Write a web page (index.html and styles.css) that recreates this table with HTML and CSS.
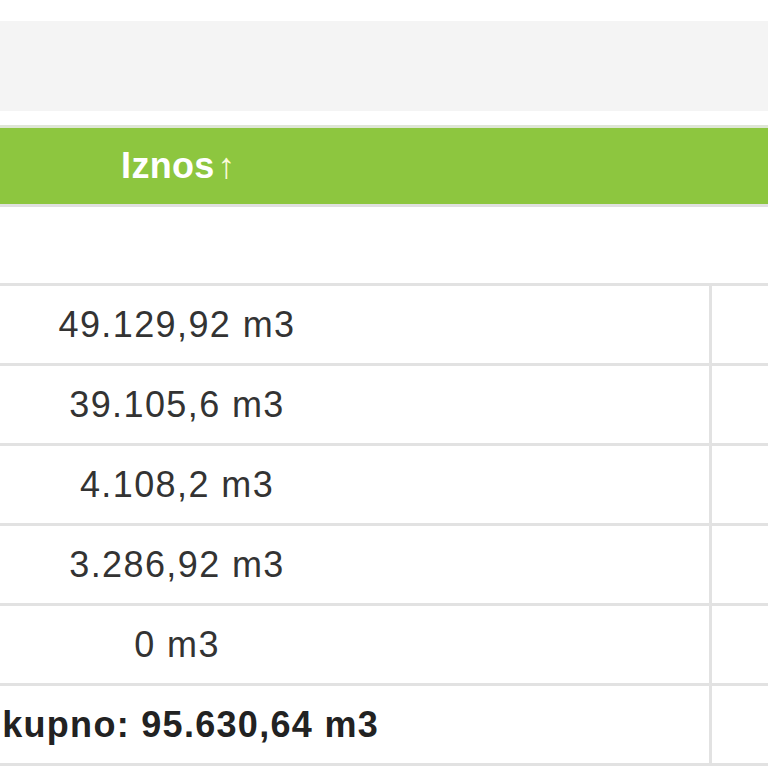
FILE: index.html
```html
<!DOCTYPE html>
<html lang="hr">
<head>
<meta charset="utf-8">
<title>Iznos</title>
<link rel="stylesheet" href="styles.css">
</head>
<body>
<div class="toolbar"></div>
<table class="grid">
  <thead>
    <tr><th class="head">Iznos<span class="arrow">↑</span></th><th class="head"></th></tr>
  </thead>
  <tbody>
    <tr class="blank"><td></td><td></td></tr>
    <tr><td class="val">49.129,92 m3</td><td></td></tr>
    <tr><td class="val">39.105,6 m3</td><td></td></tr>
    <tr><td class="val">4.108,2 m3</td><td></td></tr>
    <tr><td class="val">3.286,92 m3</td><td></td></tr>
    <tr><td class="val">0 m3</td><td></td></tr>
    <tr class="total"><td class="val">Ukupno: 95.630,64 m3</td><td></td></tr>
  </tbody>
</table>
</body>
</html>
```

FILE: styles.css
```css
html, body {
  margin: 0;
  padding: 0;
  overflow: hidden;
  background: #ffffff;
}
body {
  font-family: "Liberation Sans", Arial, sans-serif;
  color: #333333;
}
.toolbar {
  margin-top: 21px;
  height: 90px;
  background: #f4f4f4;
}
.grid {
  margin-top: 14px;
  margin-left: -355px;
  border-collapse: separate;
  border-spacing: 0;
  width: 1600px;
  table-layout: fixed;
}
.grid th, .grid td {
  padding: 0;
  box-sizing: content-box;
  font-size: 36px;
  text-align: center;
  vertical-align: middle;
}
.grid th:first-child, .grid td:first-child {
  width: 1067px;
}
.head {
  background: #8dc63f;
  color: #ffffff;
  font-weight: bold;
  height: 76px;
  letter-spacing: 0.3px;
  border-top: 3px solid #dfe6d6;
  border-bottom: 3px solid #e0e0e0;
}
.arrow {
  color: #fbfbd8;
  font-weight: normal;
  margin-left: 3px;
}
.blank td {
  height: 76px;
  border-bottom: 3px solid #e2e2e2;
}
.grid tbody tr:not(.blank) td {
  height: 77px;
  border-bottom: 3px solid #e2e2e2;
}
.grid tbody tr:not(.blank) td:first-child {
  border-right: 3px solid #e2e2e2;
}
.val {
  color: #333333;
  letter-spacing: 1.4px;
}
.total .val {
  font-weight: bold;
  color: #222222;
  letter-spacing: 1.3px;
}
```
